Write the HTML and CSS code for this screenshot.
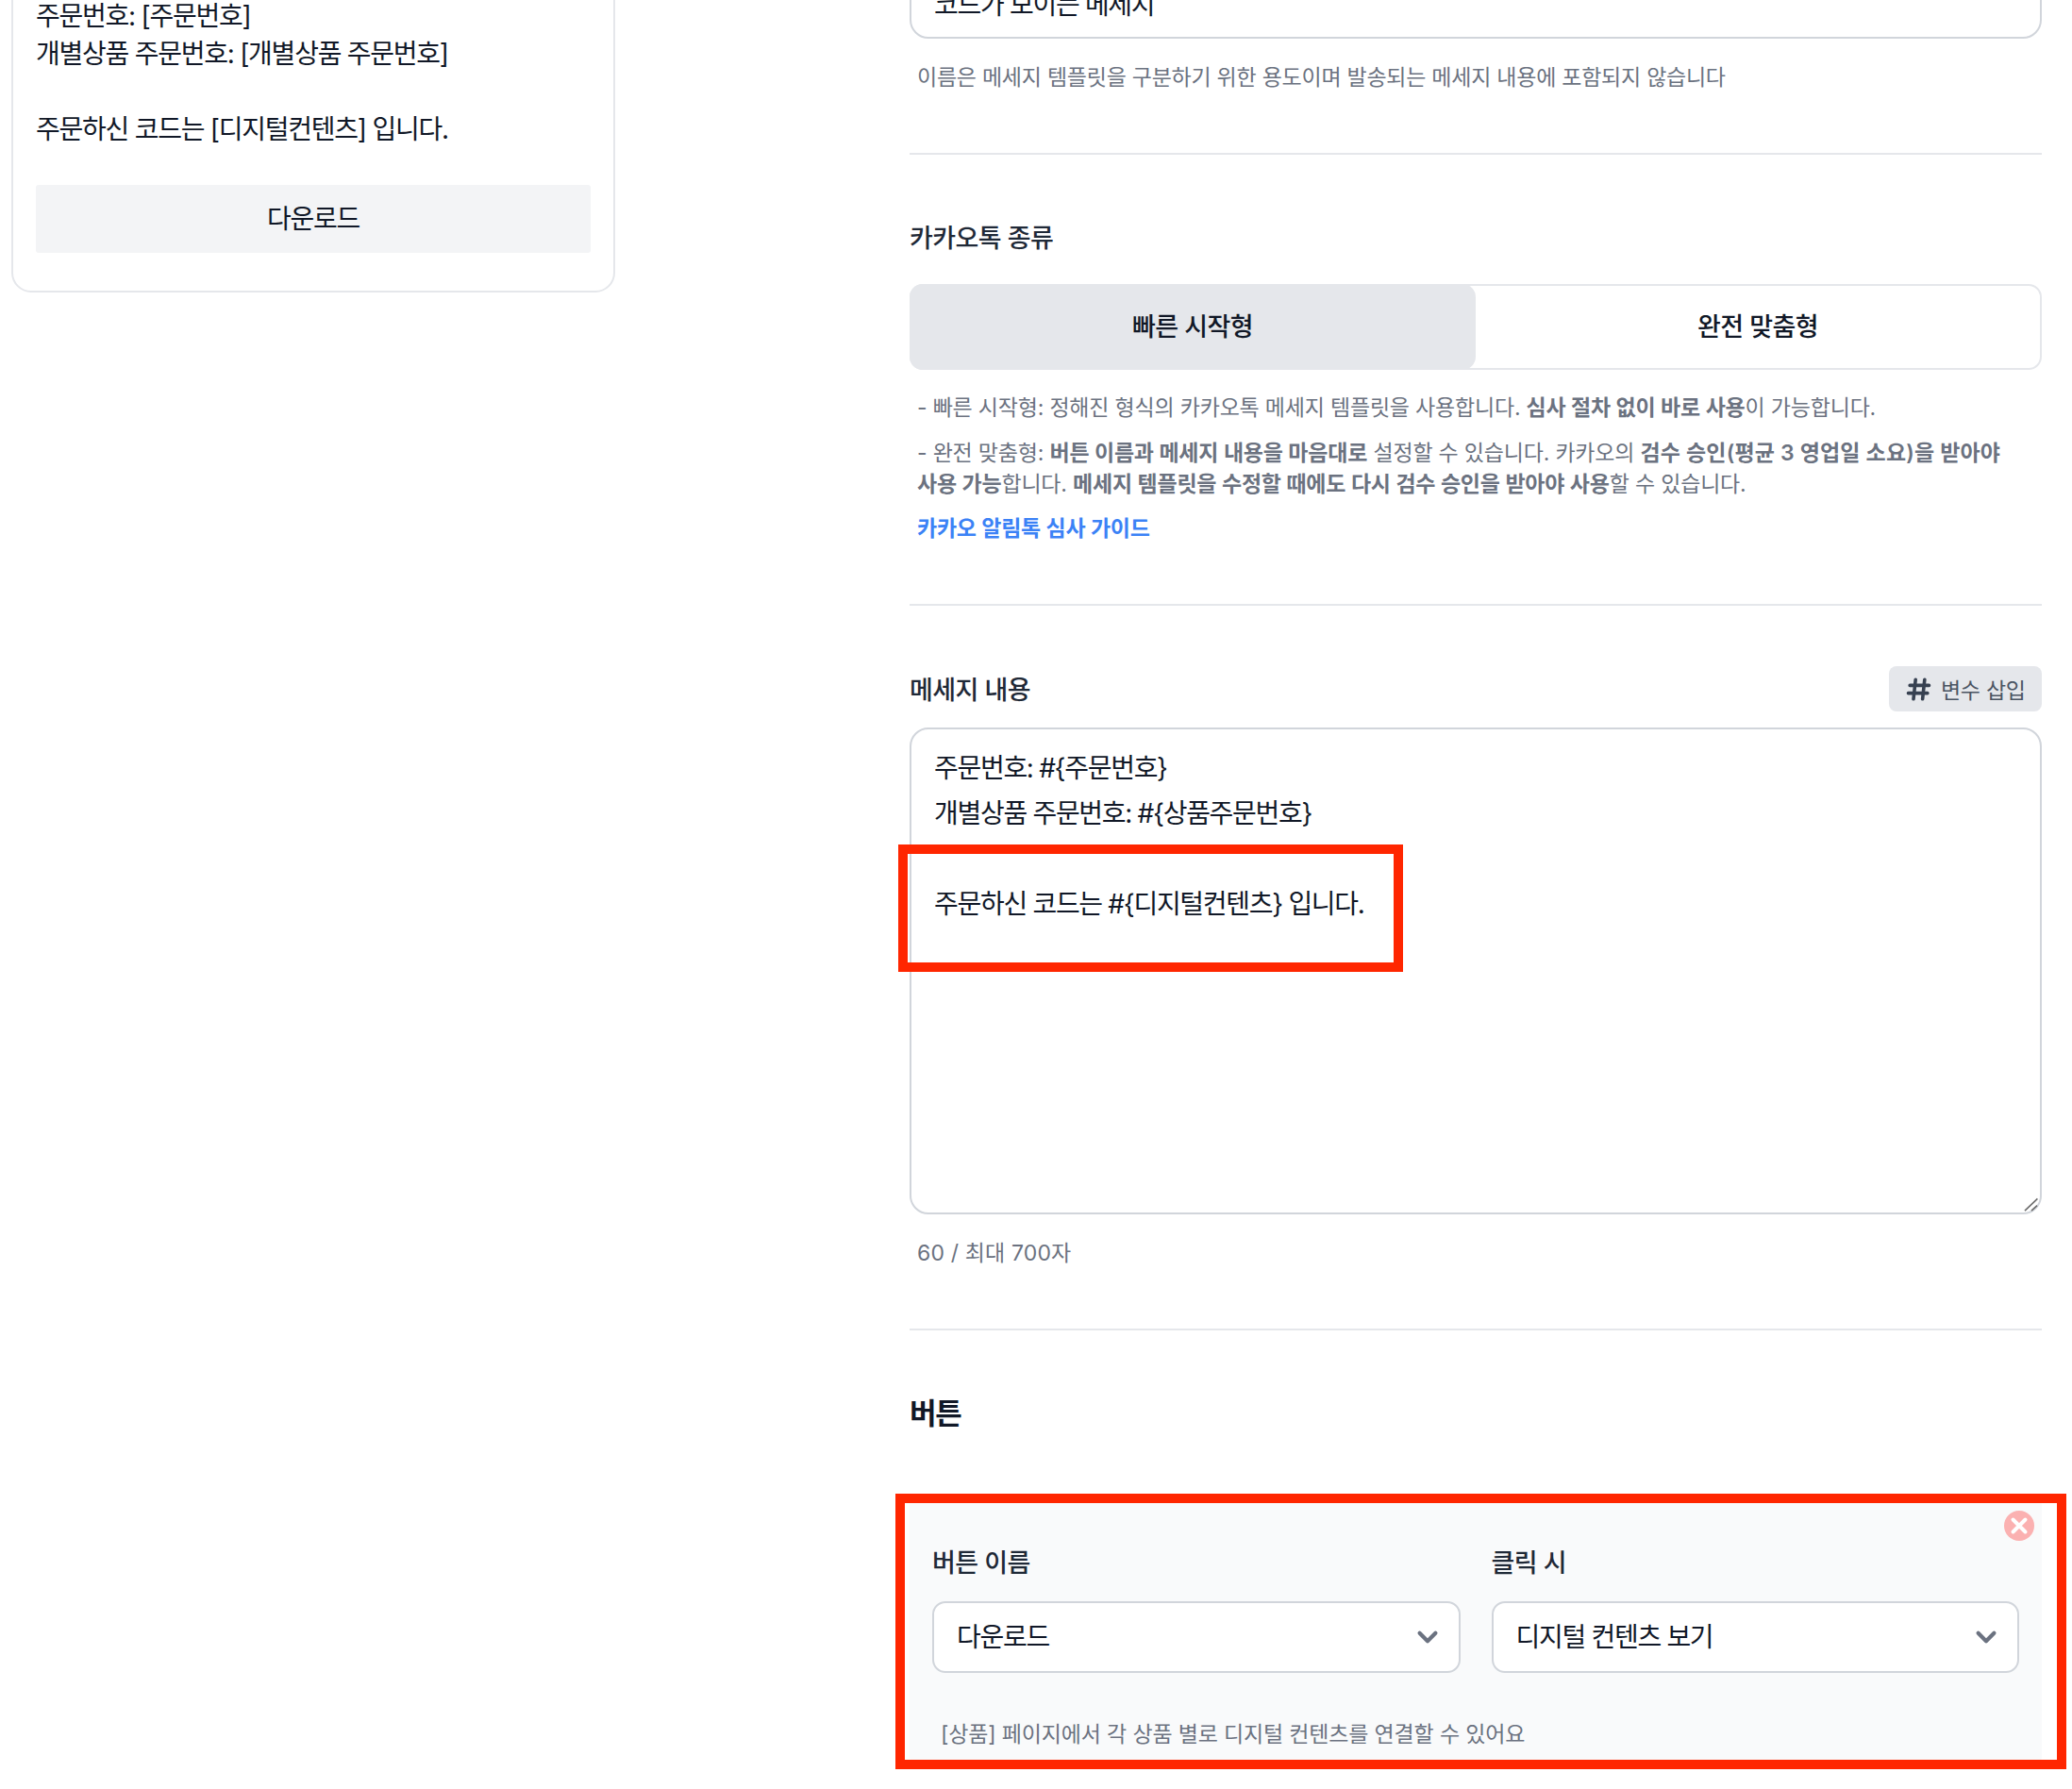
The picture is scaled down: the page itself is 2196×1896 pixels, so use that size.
FILE: index.html
```html
<!DOCTYPE html>
<html lang="ko">
<head>
<meta charset="utf-8">
<title>메세지 템플릿</title>
<link rel="stylesheet" href="styles.css">
</head>
<body>
<div class="page">
  <aside class="preview">
    <p class="preview-line">주문번호: [주문번호]</p>
    <p class="preview-line">개별상품 주문번호: [개별상품 주문번호]</p>
    <p class="preview-line">&nbsp;</p>
    <p class="preview-line">주문하신 코드는 [디지털컨텐츠] 입니다.</p>
    <div class="preview-button"><span class="nudge-up">다운로드</span></div>
  </aside>
  <main class="form">
    <div class="name-input">코드가 보이는 메세지</div>
    <p class="hint hint-name">이름은 메세지 템플릿을 구분하기 위한 용도이며 발송되는 메세지 내용에 포함되지 않습니다</p>
    <hr class="rule rule-first">

    <h2 class="label label-kind">카카오톡 종류</h2>
    <div class="segment">
      <div class="segment-item segment-active">빠른 시작형</div>
      <div class="segment-item">완전 맞춤형</div>
    </div>
    <p class="hint note note-first">- 빠른 시작형: 정해진 형식의 카카오톡 메세지 템플릿을 사용합니다. <b>심사 절차 없이 바로 사용</b>이 가능합니다.</p>
    <p class="hint note">- 완전 맞춤형: <b>버튼 이름과 메세지 내용을 마음대로</b> 설정할 수 있습니다. 카카오의 <b class="wide">검수 승인(평균 3 영업일 소요)을 받아야</b><br><b>사용 가능</b>합니다. <b>메세지 템플릿을 수정할 때에도 다시 검수 승인을 받아야 사용</b>할 수 있습니다.</p>
    <a class="guide-link">카카오 알림톡 심사 가이드</a>
    <hr class="rule">

    <div class="label-row">
      <h2 class="label label-message">메세지 내용</h2>
      <div class="insert-button">
        <svg class="hash-icon" viewBox="0 0 24 24" fill="none" stroke="#374151" stroke-width="2.6" stroke-linecap="round"><path d="M9.6 4.5L8 19.5M16.6 4.5L15 19.5M5.2 9H20M4 15h14.8"/></svg>
        <span>변수 삽입</span>
      </div>
    </div>
    <div class="message-wrap">
      <textarea class="message" readonly>주문번호: #{주문번호}
개별상품 주문번호: #{상품주문번호}

주문하신 코드는 #{디지털컨텐츠} 입니다.</textarea>
      <svg class="resize-grip" viewBox="0 0 16 16" fill="none" stroke="#6b6b6b" stroke-width="1.6"><path d="M1 15.2L14.4 2.4M8 15.2L14 9.6"/></svg>
      <div class="mark mark-text"></div>
    </div>
    <p class="hint hint-count">60 / 최대 700자</p>
    <hr class="rule">

    <h2 class="section-title">버튼</h2>
    <section class="button-panel">
      <svg class="close-icon" viewBox="0 0 32 32"><circle cx="16" cy="16" r="16" fill="#fbb1b1"/><path d="M9.5 9.5l13 13M22.5 9.5l-13 13" fill="none" stroke="#fff" stroke-width="4" stroke-linecap="round"/></svg>
      <div class="field-grid">
        <div class="field">
          <div class="field-label">버튼 이름</div>
          <div class="select">
            <span class="nudge-up">다운로드</span>
            <svg class="chevron" viewBox="0 0 20 20" fill="#6b7280"><path fill-rule="evenodd" clip-rule="evenodd" d="M5.293 7.293a1 1 0 011.414 0L10 10.586l3.293-3.293a1 1 0 111.414 1.414l-4 4a1 1 0 01-1.414 0l-4-4a1 1 0 010-1.414z"/></svg>
          </div>
        </div>
        <div class="field">
          <div class="field-label">클릭 시</div>
          <div class="select">
            <span class="nudge-up">디지털 컨텐츠 보기</span>
            <svg class="chevron" viewBox="0 0 20 20" fill="#6b7280"><path fill-rule="evenodd" clip-rule="evenodd" d="M5.293 7.293a1 1 0 011.414 0L10 10.586l3.293-3.293a1 1 0 111.414 1.414l-4 4a1 1 0 01-1.414 0l-4-4a1 1 0 010-1.414z"/></svg>
          </div>
        </div>
      </div>
      <p class="hint hint-panel">[상품] 페이지에서 각 상품 별로 디지털 컨텐츠를 연결할 수 있어요</p>
      <div class="mark mark-panel"></div>
    </section>
  </main>
</div>
</body>
</html>
```
FILE: styles.css
```css
* { box-sizing: border-box; }
html, body { margin: 0; padding: 0; background: #fff; }
body {
  height: 1896px;
  overflow: hidden;
  font-family: Inter, "Noto Sans CJK KR", sans-serif;
  color: #111827;
  letter-spacing: -1.3px;
}
.page {
  display: flex;
  align-items: flex-start;
  gap: 312px;
  padding-left: 12px;
}
.nudge-up { padding-bottom: 5px; }

/* left preview card */
.preview {
  width: 640px;
  margin-top: -40px;
  padding: 35px 24px 40px;
  border: 2px solid #e5e7eb;
  border-radius: 21px;
}
.preview-line { margin: 0; font-size: 28px; line-height: 40px; letter-spacing: -1.25px; }
.preview-button {
  margin-top: 39px;
  height: 72px;
  display: flex;
  align-items: center;
  justify-content: center;
  background: #f3f4f6;
  border-radius: 3px;
  font-size: 28px;
}

/* right form column */
.form { width: 1200px; margin-top: -35px; }
.name-input {
  height: 76px;
  padding: 0 24px;
  display: flex;
  align-items: center;
  border: 2px solid #d1d5db;
  border-radius: 20px;
  font-size: 28px;
}
.hint { margin: 0; font-size: 23px; line-height: 33px; color: #6b7280; letter-spacing: -0.2px; }
.hint b { font-weight: 600; color: #6b7280; }
.hint b.wide { letter-spacing: 0.15px; }
.hint-name { margin-top: 25px; padding-left: 8px; letter-spacing: -0.25px; }
.rule { height: 2px; margin: 63px 0 0; border: 0; background: #e5e7eb; }
.label { margin: 0; font-size: 27px; line-height: 40px; font-weight: 500; color: #1f2937; letter-spacing: -0.55px; }
.label-kind { margin-top: 69px; }
.label-message { padding-top: 4px; }

.segment {
  margin-top: 28px;
  height: 91px;
  display: grid;
  grid-template-columns: 1fr 1fr;
  border: 2px solid #e5e7eb;
  border-radius: 14px;
}
.segment-item {
  display: flex;
  align-items: center;
  justify-content: center;
  padding-bottom: 5px;
  font-size: 27px;
  font-weight: 500;
  letter-spacing: -0.55px;
}
.segment-active {
  margin: -2px 0 -2px -2px;
  background: #e5e7eb;
  border-radius: 14px;
}
.note { padding-left: 8px; margin-top: 15px; }
.note-first { margin-top: 24px; }
.guide-link {
  display: block;
  margin-top: 14px;
  padding-left: 8px;
  font-size: 23px;
  line-height: 33px;
  font-weight: 600;
  color: #3b82f6;
  letter-spacing: -0.25px;
}

.label-row {
  margin-top: 64px;
  display: flex;
  align-items: center;
  justify-content: space-between;
  height: 48px;
}
.insert-button {
  height: 48px;
  width: 162px;
  padding-left: 15px;
  display: flex;
  align-items: center;
  gap: 7px;
  background: #e5e7eb;
  border-radius: 8px;
  font-size: 23px;
  letter-spacing: -0.3px;
  color: #4b5563;
}
.hash-icon { width: 33px; height: 33px; flex: none; }
.message-wrap { position: relative; margin-top: 17px; }
.message {
  display: block;
  width: 100%;
  height: 516px;
  padding: 17px 24px 16px;
  border: 2px solid #d1d5db;
  border-radius: 20px;
  background: #fff;
  font: inherit;
  font-size: 28px;
  line-height: 48px;
  letter-spacing: -1.3px;
  color: #111827;
  outline: none;
  resize: none;
}
.resize-grip { position: absolute; right: 3px; bottom: 3px; width: 16px; height: 16px; }
.hint-count { margin-top: 25px; padding-left: 8px; letter-spacing: 0.15px; }

.section-title { margin: 66px 0 0; font-size: 31px; line-height: 44px; font-weight: 600; color: #111827; }

.button-panel {
  position: relative;
  margin-top: 65px;
  padding: 52px 24px 15px;
  background: #f9fafb;
  border-radius: 8px;
}
.close-icon { position: absolute; top: 16px; right: 8px; width: 32px; height: 32px; }
.field-grid { display: grid; grid-template-columns: 1fr 1fr; gap: 33px; }
.field-label { font-size: 27px; line-height: 40px; font-weight: 500; color: #1f2937; letter-spacing: -0.55px; }
.select {
  margin-top: 20px;
  height: 76px;
  padding: 0 12px 0 24px;
  display: flex;
  align-items: center;
  justify-content: space-between;
  background: #fff;
  border: 2px solid #d1d5db;
  border-radius: 14px;
  font-size: 28px;
}
.chevron { width: 42px; height: 42px; flex: none; }
.hint-panel { margin-top: 49px; padding-left: 9px; letter-spacing: -0.16px; }

/* red annotation boxes */
.mark { position: absolute; border: 10px solid #ff2600; pointer-events: none; }
.mark-text { top: 124px; left: -12px; width: 535px; height: 135px; }
.mark-panel { top: -2px; left: -15px; right: -26px; bottom: -5px; }
```
